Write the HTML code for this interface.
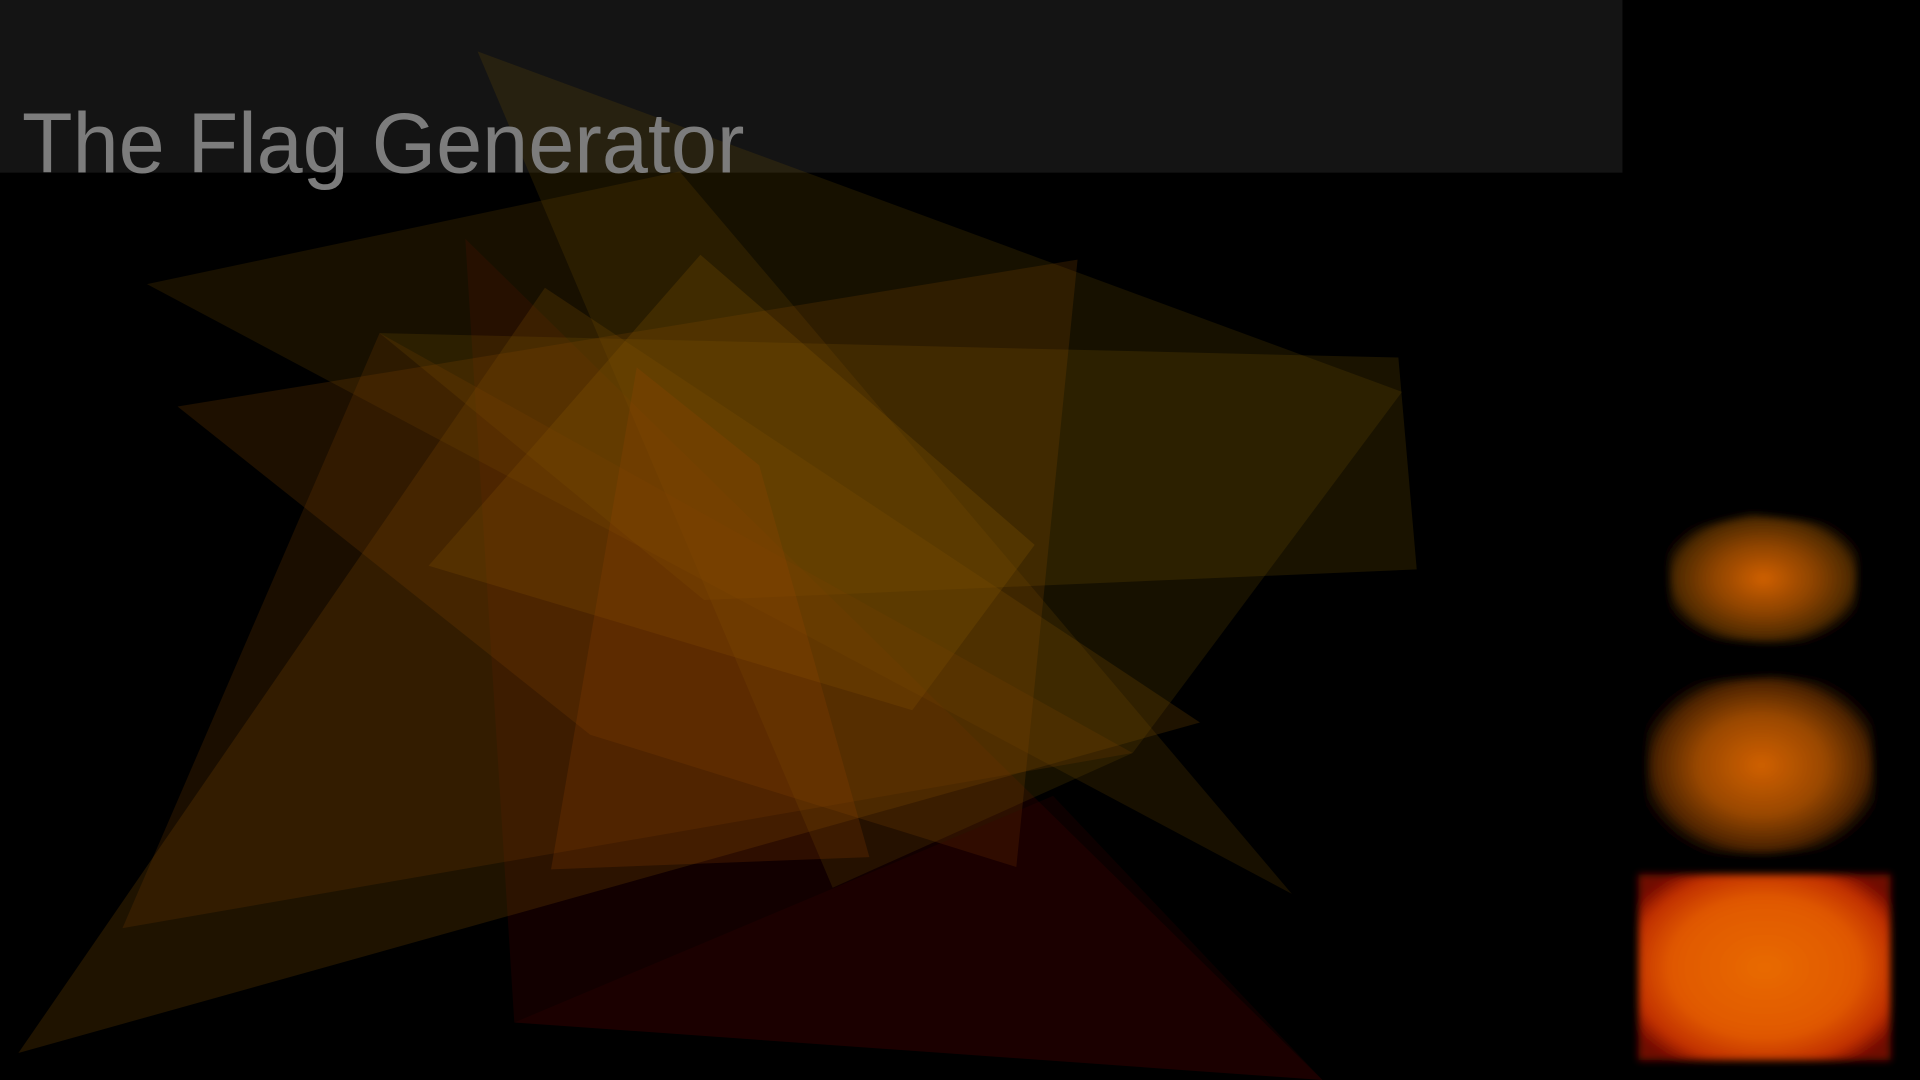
<!DOCTYPE html>
<html><head><meta charset="utf-8"><style>
html,body{margin:0;padding:0;background:#000;width:1920px;height:1080px;overflow:hidden}
svg{display:block}
</style></head><body>
<svg width="1920" height="1080" viewBox="0 0 1568 882" preserveAspectRatio="none" xmlns="http://www.w3.org/2000/svg">
<defs>
<filter id="b" x="-20%" y="-20%" width="140%" height="140%"><feGaussianBlur stdDeviation="3"/></filter>
<radialGradient id="g1" cx="50%" cy="50%" r="55%"><stop offset="0" stop-color="#d06000"/><stop offset="0.5" stop-color="#8a4200"/><stop offset="0.85" stop-color="#4a2800"/><stop offset="1" stop-color="#100800" stop-opacity="0.3"/></radialGradient>
<radialGradient id="g2" cx="50%" cy="50%" r="55%"><stop offset="0" stop-color="#d06000"/><stop offset="0.5" stop-color="#9a4800"/><stop offset="0.85" stop-color="#4a2200"/><stop offset="1" stop-color="#100800" stop-opacity="0.3"/></radialGradient>
<radialGradient id="g3" cx="50%" cy="50%" r="62%"><stop offset="0" stop-color="#e86a00"/><stop offset="0.6" stop-color="#e05800"/><stop offset="0.85" stop-color="#c03000"/><stop offset="1" stop-color="#700800"/></radialGradient>
</defs>
<rect x="0" y="0" width="1325" height="141" fill="#141414"/>
<g>
<polygon points="380,195 1080,882 420,835" fill="#5a0000" fill-opacity="0.2"/>
<polygon points="15,860 445,235 980,590" fill="#7a4a00" fill-opacity="0.25"/>
<polygon points="390,42 1145,320 925,615 680,725" fill="#806000" fill-opacity="0.18"/>
<polygon points="310,272 1142,292 1157,465 575,490" fill="#806000" fill-opacity="0.2"/>
<polygon points="120,232 1055,730 555,140" fill="#7a5000" fill-opacity="0.2"/>
<polygon points="145,332 880,212 830,708 482,600" fill="#8a4a00" fill-opacity="0.22"/>
<polygon points="350,462 572,208 845,445 745,580" fill="#906000" fill-opacity="0.22"/>
<polygon points="100,758 925,615 310,272" fill="#7a4000" fill-opacity="0.22"/>
<polygon points="520,300 620,380 710,700 450,710" fill="#a04800" fill-opacity="0.2"/>
<polygon points="420,835 1080,882 860,650" fill="#400000" fill-opacity="0.2"/>
</g>
<text x="18" y="141" font-family="Liberation Sans, sans-serif" font-size="70" fill="#7c7c7c" textLength="590" lengthAdjust="spacingAndGlyphs">The Flag Generator</text>
<g filter="url(#b)">
<polygon points="1362,435 1430,420 1518,430 1515,525 1440,525 1365,520" fill="url(#g1)"/>
<polygon points="1345,560 1450,552 1528,560 1532,690 1440,698 1345,695" fill="url(#g2)"/>
<rect x="1338" y="714" width="206" height="152" fill="url(#g3)"/>
</g>
</svg>
</body></html>
